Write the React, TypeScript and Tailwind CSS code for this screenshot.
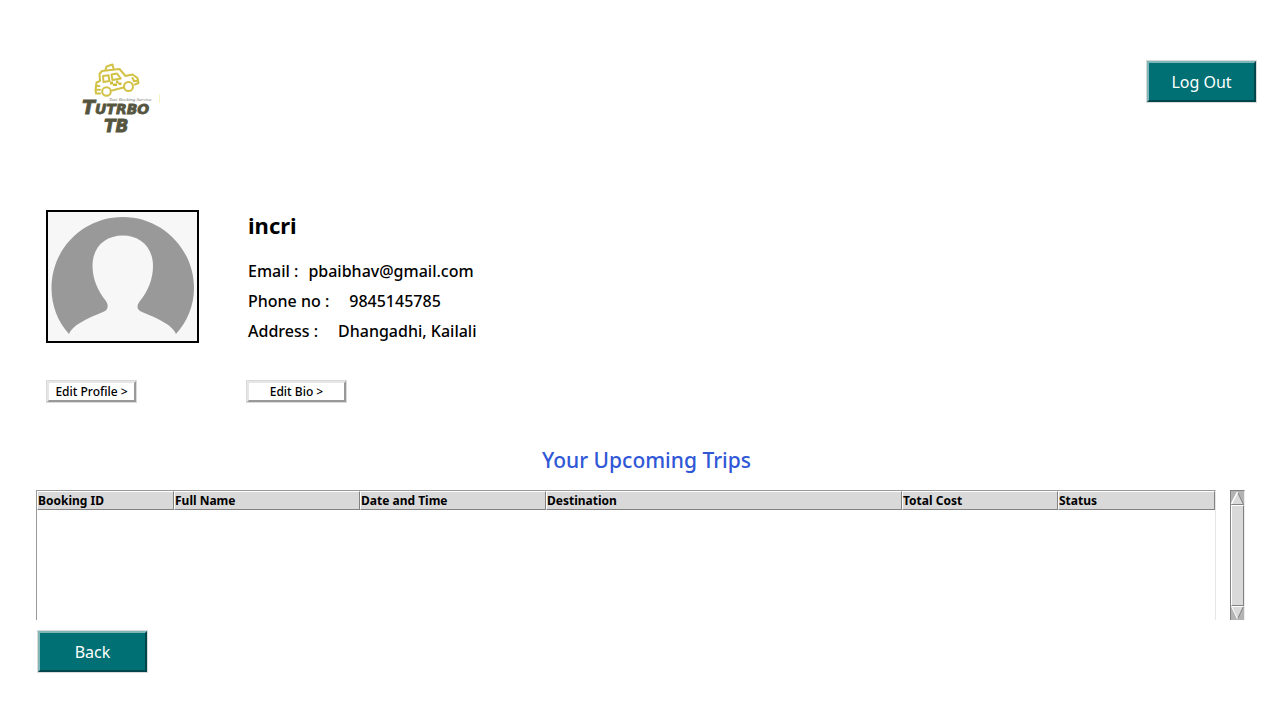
import React from "react";

const columns = [
  { label: "Booking ID", width: "w-[137px]" },
  { label: "Full Name", width: "w-[186px]" },
  { label: "Date and Time", width: "w-[186px]" },
  { label: "Destination", width: "w-[356px]" },
  { label: "Total Cost", width: "w-[156px]" },
  { label: "Status", width: "w-[157px]" },
];

const details = [
  { label: "Email :", value: "pbaibhav@gmail.com", gap: "gap-[10px]" },
  { label: "Phone no :", value: "9845145785", gap: "gap-5" },
  { label: "Address :", value: "Dhangadhi, Kailali", gap: "gap-5" },
];

function TealButton({ children }: { children: React.ReactNode }) {
  return (
    <span className="inline-flex border border-[#d9d9d9]">
      <button
        type="button"
        className="h-[41px] w-[109px] border-2 border-t-[#7fb7b9] border-r-[#00464a] border-b-[#00464a] border-l-[#7fb7b9] bg-[#007074] text-base text-white"
      >
        {children}
      </button>
    </span>
  );
}

function SmallButton({ children, width }: { children: React.ReactNode; width: string }) {
  return (
    <span className="inline-flex border border-[#d9d9d9]">
      <button
        type="button"
        className={`${width} h-[21px] border-2 border-t-[#e6e6e6] border-r-[#999999] border-b-[#999999] border-l-[#e6e6e6] bg-white text-xs leading-4 font-medium whitespace-nowrap text-black`}
      >
        {children}
      </button>
    </span>
  );
}

function Logo() {
  return (
    <svg viewBox="0 0 100 95" className="h-[95px] w-[100px]" role="img" aria-label="Tutrbo TB">
      <g fill="none" stroke="#d2c245" strokeWidth="2" strokeLinejoin="round" strokeLinecap="round">
        <path d="M30 43.500 L26 43.500 L25.500 40 L26.500 32.500 L30 31 L29.500 24 L32 21 L49.500 19 L55.500 26 L62.500 24.500 L67.500 28 L68.500 33 L65 34.500" />
        <path d="M35.500 20 L36.500 16.500 L42.500 14.500 L43.500 18.500" />
        <path d="M33 26 L38.500 25.300 L39.500 31 L33.500 32 Z" />
        <path d="M41.500 24.500 L47 23.500 L50.800 28.500 L42.500 30 Z" />
        <path d="M42 40.500 L53.500 37.500" />
        <path d="M26 36 L29.500 36 M26 39.800 L30 39.800" />
        <path d="M62.500 28 L64 31.300 L68 30.500" />
        <circle cx="36.500" cy="41.500" r="4.300" />
        <circle cx="58.500" cy="36.500" r="4.500" />
      </g>
      <path
        d="M40 31.500h3v3h-3z M43 33.500h3v2.500h-3z M46 30.500h2.500v3h-2.500z M48.500 32.500h3v2.500h-3z M45 34h2v2h-2z"
        fill="#cfbd3c"
      />
      <path d="M89.500 44v9" stroke="#f7f3c0" strokeWidth="1" />
      <text x="39" y="51" fontSize="5" fontStyle="italic" fill="#77776d" fontFamily="Liberation Serif, serif">
        Taxi Booking Service
      </text>
      <g fill="#55553f" stroke="#55553f" strokeWidth="0.8" fontFamily="DejaVu Sans, sans-serif" fontWeight="700" fontStyle="italic">
        <text x="12" y="64">
          <tspan fontSize="19">T</tspan>
          <tspan fontSize="14">UTRBO</tspan>
        </text>
        <text x="34" y="82" fontSize="17">TB</text>
      </g>
    </svg>
  );
}

function Avatar() {
  return (
    <svg viewBox="0 0 149 129" className="block h-[129px] w-[149px] bg-[#f7f7f7]" role="img" aria-label="Profile picture">
      <path
        d="M21 122 C10 110 3.500 94 3.500 76 C3.500 37 35 5 75 5 C114 5 146 37 146 76 C146 94 139 110 128 122 C125 114 112 107 94 100 C89 98 88 94 92 89 C100 79 105 67 105 54 C105 35 92 23.500 75 23.500 C57 23.500 44.500 35 44.500 54 C44.500 67 50 79 58 89 C61 94 60 98 55 100 C37 107 24 114 21 122Z"
        fill="#999999"
      />
    </svg>
  );
}

function Scrollbar() {
  return (
    <div className="flex w-[15px] flex-col border-t border-r border-l border-t-[#828282] border-r-[#ececec] border-l-[#828282] bg-[#b3b3b3]">
      <button type="button" aria-label="Scroll up" className="block h-[14px]">
        <svg viewBox="0 0 13 14" className="h-[14px] w-[13px]">
          <path d="M6.500 1 L12.500 13.500 H0.500Z" fill="#d9d9d9" />
          <path d="M12.500 13.500 H0.500" stroke="#828282" />
          <path d="M6.500 1 L12.500 13.500" stroke="#828282" />
          <path d="M0.500 13 L6.500 1" stroke="#ffffff" strokeWidth="1.500" />
        </svg>
      </button>
      <div className="flex-1 border border-t-white border-r-[#828282] border-b-[#828282] border-l-white bg-[#d9d9d9]" />
      <button type="button" aria-label="Scroll down" className="block h-[14px]">
        <svg viewBox="0 0 13 14" className="h-[14px] w-[13px]">
          <path d="M0.500 0.500 H12.500 L6.500 13Z" fill="#d9d9d9" />
          <path d="M12.500 0.500 L6.500 13" stroke="#828282" />
          <path d="M12.500 0.500 H0.500 L6.500 13" fill="none" stroke="#ffffff" />
        </svg>
      </button>
    </div>
  );
}

export default function App() {
  return (
    <main className="min-h-screen bg-white pr-[23px] pb-12 pl-9 font-['Noto_Sans',sans-serif] text-black">
      <header className="flex h-[210px] items-start justify-between">
        <div className="pt-[50px] pl-[34px]">
          <Logo />
        </div>
        <div className="pt-[60px]">
          <TealButton>Log Out</TealButton>
        </div>
      </header>

      <section className="grid grid-cols-[200px_1fr] pl-[10px]">
        <div>
          <div className="inline-block border-2 border-black align-top">
            <Avatar />
          </div>
        </div>
        <div className="pl-[2px]">
          <h1 className="text-[22px] leading-[30px] font-bold">incri</h1>
          <dl className="mt-4">
            {details.map((item) => (
              <div key={item.label} className={`flex h-[30px] items-center ${item.gap} text-base font-medium`}>
                <dt>{item.label}</dt>
                <dd>{item.value}</dd>
              </div>
            ))}
          </dl>
        </div>
        <div className="mt-[34px] flex">
          <SmallButton width="w-[89px]">Edit Profile &gt;</SmallButton>
        </div>
        <div className="mt-[34px] flex">
          <SmallButton width="w-[99px]">Edit Bio &gt;</SmallButton>
        </div>
      </section>

      <section className="mt-[41px]">
        <h2 className="text-center text-[21px] leading-8 font-medium text-[#3058d6]">Your Upcoming Trips</h2>
        <div className="mt-[14px] flex h-[130px] gap-[14px] pr-3">
          <div className="flex-1 border-t border-r border-l border-t-[#999999] border-r-[#e6e6e6] border-l-[#999999]">
            <table className="w-full table-fixed border-separate border-spacing-0">
              <thead>
                <tr>
                  {columns.map((column) => (
                    <th
                      key={column.label}
                      scope="col"
                      className={`${column.width} h-[19px] border border-t-white border-r-[#828282] border-b-[#828282] border-l-white bg-[#d9d9d9] p-0 text-left text-xs leading-[17px] font-bold`}
                    >
                      {column.label}
                    </th>
                  ))}
                </tr>
              </thead>
              <tbody />
            </table>
          </div>
          <Scrollbar />
        </div>
      </section>

      <footer className="mt-[10px] flex pl-px">
        <TealButton>Back</TealButton>
      </footer>
    </main>
  );
}
